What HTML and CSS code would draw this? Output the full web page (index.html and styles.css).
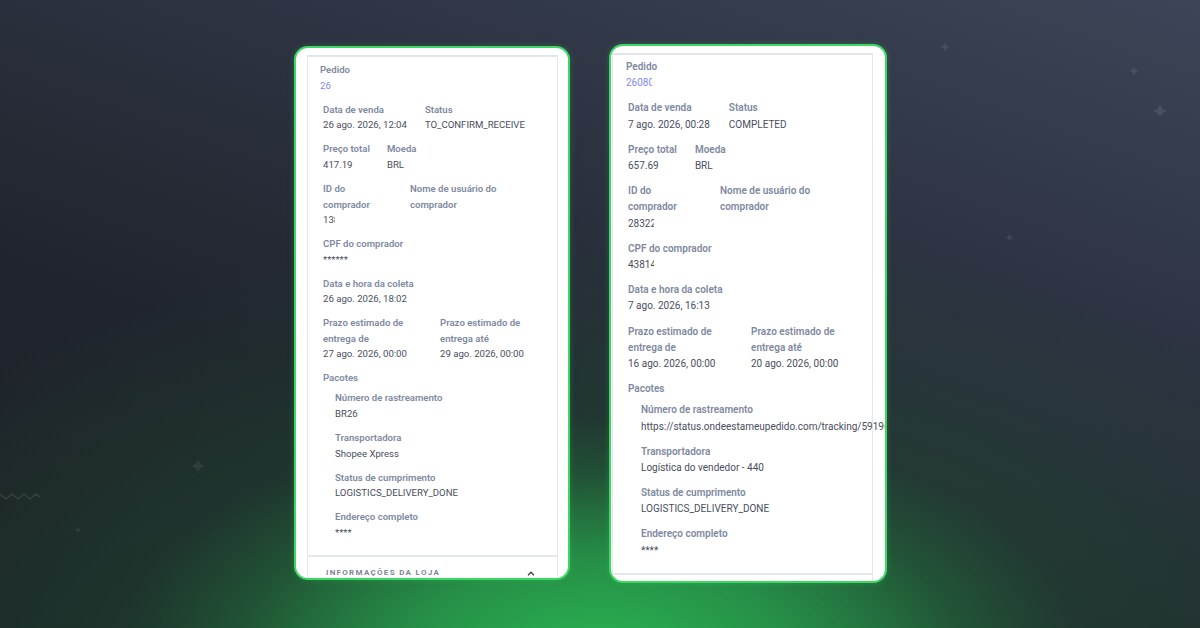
FILE: index.html
```html
<!DOCTYPE html>
<html lang="pt-BR">
<head>
<meta charset="utf-8">
<title>Pedidos</title>
<link rel="stylesheet" href="styles.css">
</head>
<body>
<div class="deco">
  <svg class="star s1" viewBox="-10 -10 20 20"><path d="M0 -10 Q1 -1 10 0 Q1 1 0 10 Q-1 1 -10 0 Q-1 -1 0 -10Z"/></svg>
  <svg class="star s2" viewBox="-10 -10 20 20"><path d="M0 -10 Q1 -1 10 0 Q1 1 0 10 Q-1 1 -10 0 Q-1 -1 0 -10Z"/></svg>
  <svg class="star s3" viewBox="-10 -10 20 20"><path d="M0 -10 Q1 -1 10 0 Q1 1 0 10 Q-1 1 -10 0 Q-1 -1 0 -10Z"/></svg>
  <svg class="star s4" viewBox="-10 -10 20 20"><path d="M0 -10 Q1 -1 10 0 Q1 1 0 10 Q-1 1 -10 0 Q-1 -1 0 -10Z"/></svg>
  <svg class="star s5" viewBox="-10 -10 20 20"><path d="M0 -10 Q1 -1 10 0 Q1 1 0 10 Q-1 1 -10 0 Q-1 -1 0 -10Z"/></svg>
  <svg class="star s6" viewBox="-10 -10 20 20"><path d="M0 -10 Q1 -1 10 0 Q1 1 0 10 Q-1 1 -10 0 Q-1 -1 0 -10Z"/></svg>
  <svg class="zigzag" viewBox="0 0 40 10"><polyline points="0,3 6,8 12,3 18,8 24,3 30,8 36,3 40,6"/></svg>
</div>

<main class="stage">
  <section class="card card-a">
    <div class="panel">
      <div class="body">
        <div class="pedido">
          <div class="label">Pedido</div>
          <div class="value link">26</div>
        </div>
        <div class="fields">
          <div class="row">
            <div class="field gap-r"><div class="label">Data de venda</div><div class="value">26 ago. 2026, 12:04</div></div>
            <div class="field"><div class="label">Status</div><div class="value">TO_CONFIRM_RECEIVE</div></div>
          </div>
          <div class="row">
            <div class="field gap-r2"><div class="label">Preço total</div><div class="value">417.19</div></div>
            <div class="field"><div class="label">Moeda</div><div class="value">BRL</div></div>
          </div>
          <div class="row">
            <div class="field f-id"><div class="label">ID do comprador</div><div class="value clip clip-s">13845</div></div>
            <div class="field f-nome"><div class="label">Nome de usuário do comprador</div></div>
          </div>
          <div class="field"><div class="label">CPF do comprador</div><div class="value">******</div></div>
          <div class="field"><div class="label">Data e hora da coleta</div><div class="value">26 ago. 2026, 18:02</div></div>
          <div class="row">
            <div class="field f-prazo"><div class="label">Prazo estimado de entrega de</div><div class="value">27 ago. 2026, 00:00</div></div>
            <div class="field f-prazo2"><div class="label">Prazo estimado de entrega até</div><div class="value">29 ago. 2026, 00:00</div></div>
          </div>
          <div class="field pacotes"><div class="label">Pacotes</div></div>
          <div class="sub">
            <div class="field"><div class="label">Número de rastreamento</div><div class="value">BR26</div></div>
            <div class="field"><div class="label">Transportadora</div><div class="value">Shopee Xpress</div></div>
            <div class="field"><div class="label">Status de cumprimento</div><div class="value">LOGISTICS_DELIVERY_DONE</div></div>
            <div class="field last"><div class="label">Endereço completo</div><div class="value">****</div></div>
          </div>
        </div>
      </div>
      <div class="section-head">
        <span class="section-title">INFORMAÇÕES DA LOJA</span>
        <svg class="chev" viewBox="0 0 8 5"><polyline points="1,4.2 4,1.2 7,4.2"/></svg>
      </div>
    </div>
  </section>

  <section class="card card-b">
    <div class="panel">
      <div class="body">
        <div class="pedido">
          <div class="label">Pedido</div>
          <div class="value link clip clip-m">260807</div>
        </div>
        <div class="fields">
          <div class="row">
            <div class="field gap-r"><div class="label">Data de venda</div><div class="value">7 ago. 2026, 00:28</div></div>
            <div class="field"><div class="label">Status</div><div class="value">COMPLETED</div></div>
          </div>
          <div class="row">
            <div class="field gap-r2"><div class="label">Preço total</div><div class="value">657.69</div></div>
            <div class="field"><div class="label">Moeda</div><div class="value">BRL</div></div>
          </div>
          <div class="row">
            <div class="field f-id"><div class="label">ID do comprador</div><div class="value clip clip-m">283224</div></div>
            <div class="field f-nome"><div class="label">Nome de usuário do comprador</div></div>
          </div>
          <div class="field"><div class="label cut">CPF do comprador</div><div class="value clip clip-m">438145</div></div>
          <div class="field"><div class="label">Data e hora da coleta</div><div class="value">7 ago. 2026, 16:13</div></div>
          <div class="row">
            <div class="field f-prazo"><div class="label">Prazo estimado de entrega de</div><div class="value">16 ago. 2026, 00:00</div></div>
            <div class="field f-prazo2"><div class="label">Prazo estimado de entrega até</div><div class="value">20 ago. 2026, 00:00</div></div>
          </div>
          <div class="field pacotes"><div class="label">Pacotes</div></div>
          <div class="sub">
            <div class="field"><div class="label">Número de rastreamento</div><div class="value nowrap">https://status.ondeestameupedido.com/tracking/59196</div></div>
            <div class="field"><div class="label">Transportadora</div><div class="value">Logística do vendedor - 440</div></div>
            <div class="field"><div class="label">Status de cumprimento</div><div class="value">LOGISTICS_DELIVERY_DONE</div></div>
            <div class="field last"><div class="label">Endereço completo</div><div class="value">****</div></div>
          </div>
        </div>
      </div>
      <div class="section-head empty"></div>
    </div>
  </section>
</main>
</body>
</html>
```

FILE: styles.css
```css
* { box-sizing: border-box; }

html, body {
  margin: 0;
  padding: 0;
}

body {
  width: 1200px;
  height: 628px;
  overflow: hidden;
  position: relative;
  font-family: Roboto, "Liberation Sans", Arial, sans-serif;
  background:
    radial-gradient(ellipse 480px 240px at 600px 655px, rgba(42, 178, 82, 1) 0%, rgba(40, 165, 78, 0.75) 40%, rgba(36, 130, 65, 0.32) 75%, rgba(34, 110, 58, 0) 100%),
    radial-gradient(ellipse 900px 470px at 600px 700px, rgba(34, 124, 63, 0.72) 0%, rgba(32, 92, 54, 0.36) 50%, rgba(30, 60, 45, 0) 100%),
    linear-gradient(200deg, #3c4457 0%, #2c3240 35%, #20242d 65%, #1c2026 100%);
}

/* decorative sparkles on the free canvas */
.deco {
  position: absolute;
  inset: 0;
  pointer-events: none;
}
.star {
  position: absolute;
  fill: rgba(255, 255, 255, 0.09);
}
.s1 { left: 940px; top: 42px; width: 10px; height: 10px; }
.s2 { left: 1129px; top: 66px; width: 10px; height: 10px; }
.s3 { left: 1152px; top: 103px; width: 16px; height: 16px; }
.s4 { left: 1005px; top: 233px; width: 9px; height: 9px; }
.s5 { left: 190px; top: 458px; width: 16px; height: 16px; fill: rgba(255,255,255,0.07); }
.s6 { left: 74px; top: 526px; width: 8px; height: 8px; fill: rgba(255,255,255,0.07); }
.zigzag {
  position: absolute;
  left: 0;
  top: 491px;
  width: 40px;
  height: 10px;
  fill: none;
  stroke: rgba(255, 255, 255, 0.1);
  stroke-width: 1.6;
}

.stage {
  position: relative;
  display: flex;
  align-items: flex-start;
  padding-left: 294px;
  gap: 39px;
}

.card {
  background: #ffffff;
  border: 2px solid #3fd763;
  border-radius: 14px;
  overflow: hidden;
  box-shadow: 0 0 6px rgba(60, 220, 100, 0.25);
}

.card-a {
  --fs: 9.6px;
  --lh: 15.6px;
  --g: 8.4px;
  --sg: 4.4px;
  width: 276px;
  height: 534px;
  margin-top: 46px;
  padding: 7px 10px 0 11px;
}

.card-b {
  --fs: 10px;
  --lh: 16.3px;
  --g: 8.8px;
  --sg: 4.7px;
  width: 278px;
  height: 539px;
  margin-top: 44px;
  padding: 7px 12px 0 1px;
}

.panel {
  border: 1px solid #e6e8ef;
  border-top: 2px solid #e2e5ee;
  border-bottom: none;
  height: 100%;
}

.label {
  font-size: var(--fs);
  line-height: var(--lh);
  font-weight: 600;
  color: #7e89a1;
}

.value {
  font-size: var(--fs);
  line-height: var(--lh);
  font-weight: 400;
  color: #484e5e;
}

.link { color: #8088f4; }

.clip {
  overflow: hidden;
  white-space: nowrap;
}
.clip-s { width: 12px; }
.clip-m { width: 26px; }
.nowrap { white-space: nowrap; }

.cut {
  height: 13px;
  overflow: hidden;
  margin-bottom: 3.3px;
}

.card-a .body { padding: 5.2px 0 14.6px 0; }
.card-b .body { padding: 3.9px 0 14.2px 0; }

.card-a .pedido { padding-left: 12px; margin-bottom: var(--g); }
.card-b .pedido { padding-left: 13px; margin-bottom: var(--g); }

.fields { padding-left: 15px; }

.field { margin-bottom: var(--g); }
.row { display: flex; margin-bottom: var(--g); }
.row .field { margin-bottom: 0; }

.card-a .gap-r { margin-right: 18px; }
.card-a .gap-r2 { margin-right: 17px; }
.card-b .gap-r { margin-right: 19px; }
.card-b .gap-r2 { margin-right: 18px; }

.card-a .f-id { width: 60px; margin-right: 27px; }
.card-b .f-id { width: 63px; margin-right: 29px; }
.f-nome { width: 104px; }

.card-a .f-prazo { width: 100px; margin-right: 17px; }
.card-b .f-prazo { width: 105px; margin-right: 18px; }
.f-prazo2 { width: 100px; }

.field.pacotes { margin-bottom: var(--sg); }

.card-a .sub { padding-left: 12px; }
.card-b .sub { padding-left: 13px; }

.field.last { margin-bottom: 0; }

.section-head {
  border-top: 2px solid #e4e7ee;
  display: flex;
  align-items: center;
  justify-content: space-between;
  padding: 9.5px 22px 0 18px;
}
.section-title {
  font-size: 8px;
  line-height: 14px;
  font-weight: 700;
  letter-spacing: 1.3px;
  color: #7b8599;
}
.chev {
  width: 8px;
  height: 5px;
  fill: none;
  stroke: #3d4250;
  stroke-width: 1.3;
}
```
